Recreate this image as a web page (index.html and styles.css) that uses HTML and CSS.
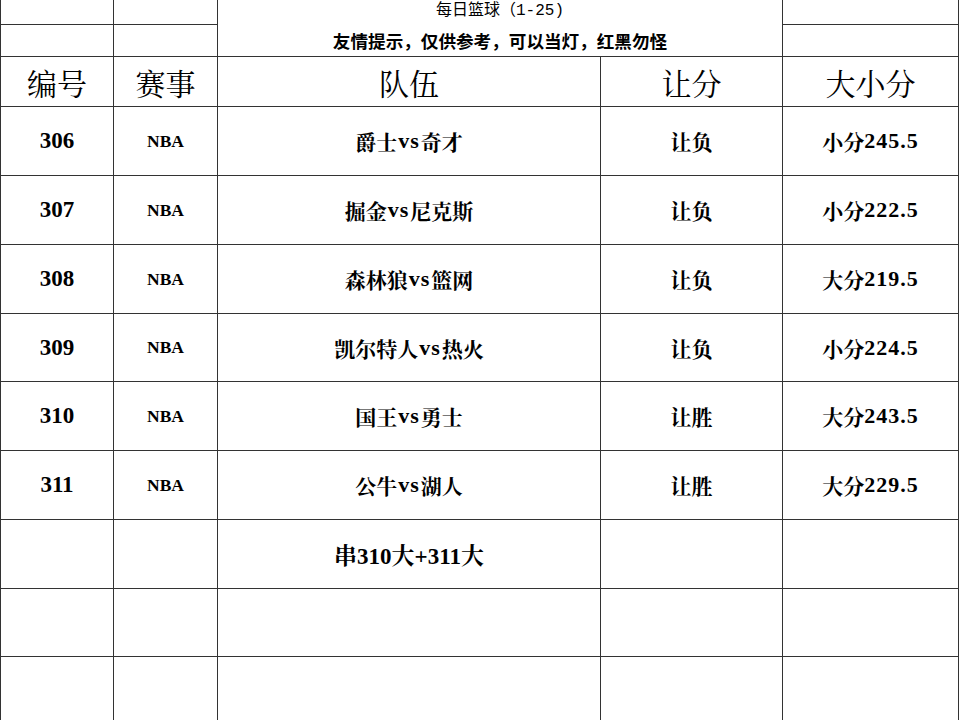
FILE: index.html
```html
<!DOCTYPE html>
<html lang="zh-CN">
<head>
<meta charset="utf-8">
<title>每日篮球</title>
<link rel="stylesheet" href="styles.css">
</head>
<body>
<div class="sheet">
  <div class="cell"></div>
  <div class="cell"></div>
  <div class="cell title-cell">
    <div class="title">每日篮球（1-25)</div>
    <div class="tip">友情提示，仅供参考，可以当灯，红黑勿怪</div>
  </div>
  <div class="cell"></div>
  <div class="cell"></div>
  <div class="cell"></div>
  <div class="cell"></div>

  <div class="cell head">编号</div>
  <div class="cell head">赛事</div>
  <div class="cell head">队伍</div>
  <div class="cell head">让分</div>
  <div class="cell head">大小分</div>

  <div class="cell num">306</div><div class="cell league">NBA</div><div class="cell data">爵士<span class="vs">vs</span>奇才</div><div class="cell data">让负</div><div class="cell data">小分<span class="n">245.5</span></div>
  <div class="cell num">307</div><div class="cell league">NBA</div><div class="cell data">掘金<span class="vs">vs</span>尼克斯</div><div class="cell data">让负</div><div class="cell data">小分<span class="n">222.5</span></div>
  <div class="cell num">308</div><div class="cell league">NBA</div><div class="cell data">森林狼<span class="vs">vs</span>篮网</div><div class="cell data">让负</div><div class="cell data">大分<span class="n">219.5</span></div>
  <div class="cell num">309</div><div class="cell league">NBA</div><div class="cell data">凯尔特人<span class="vs">vs</span>热火</div><div class="cell data">让负</div><div class="cell data">小分<span class="n">224.5</span></div>
  <div class="cell num">310</div><div class="cell league">NBA</div><div class="cell data">国王<span class="vs">vs</span>勇士</div><div class="cell data">让胜</div><div class="cell data">大分<span class="n">243.5</span></div>
  <div class="cell num">311</div><div class="cell league">NBA</div><div class="cell data">公牛<span class="vs">vs</span>湖人</div><div class="cell data">让胜</div><div class="cell data">大分<span class="n">229.5</span></div>

  <div class="cell"></div><div class="cell"></div><div class="cell combo">串310大+311大</div><div class="cell"></div><div class="cell"></div>
  <div class="cell"></div><div class="cell"></div><div class="cell"></div><div class="cell"></div><div class="cell"></div>
  <div class="cell"></div><div class="cell"></div><div class="cell"></div><div class="cell"></div><div class="cell"></div>
</div>
</body>
</html>
```

FILE: styles.css
```css
html, body {
  margin: 0;
  padding: 0;
  background: #ffffff;
}

body {
  font-family: "Liberation Serif", "Noto Serif CJK SC", "Noto Sans CJK SC", serif;
  color: #000000;
  overflow: hidden;
}

.sheet {
  display: grid;
  grid-template-columns: 112px 103px 382px 181px 175px;
  grid-template-rows: 24px 31px 49px 68px 68px 68px 67px 68px 68px 68px 67px 68px;
  gap: 1px;
  padding: 0 1px;
  width: max-content;
  background: #333333;
}

.cell {
  background: #ffffff;
  display: flex;
  align-items: center;
  justify-content: center;
  white-space: nowrap;
}

.title-cell {
  grid-column: 3 / span 2;
  grid-row: 1 / span 2;
  display: grid;
  grid-template-rows: 25px 31px;
  align-items: center;
  justify-items: center;
}

.title {
  font-family: "Liberation Mono", "Noto Sans CJK SC", monospace;
  font-size: 16px;
  line-height: 1;
  margin-top: -3px;
}

.tip {
  font-family: "Noto Sans CJK SC", sans-serif;
  font-size: 17.6px;
  font-weight: 700;
  line-height: 1;
  margin-top: 1px;
}

.head {
  font-family: "Noto Serif CJK SC", "Noto Sans CJK SC", serif;
  font-size: 30px;
  font-weight: 400;
  line-height: 1;
}

.num {
  font-size: 23px;
  font-weight: 700;
}

.league {
  font-size: 17.5px;
  font-weight: 700;
}

.data {
  font-size: 21px;
  font-weight: 700;
}

.vs {
  font-size: 22px;
  letter-spacing: 1px;
  padding: 0 1px;
}

.n {
  font-size: 22px;
  letter-spacing: 1px;
}

.combo {
  font-size: 23px;
  font-weight: 700;
}
```
